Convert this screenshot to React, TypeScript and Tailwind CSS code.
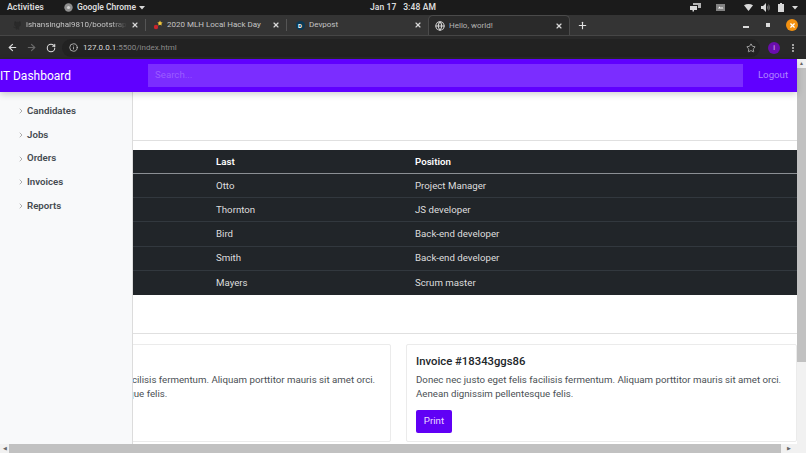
import React from "react";
import { Star, EllipsisVertical, Plus, X, ArrowLeft, ArrowRight, RotateCw, Info, ChevronRight, Globe, Github } from "lucide-react";

const font = "font-['Roboto','Noto_Sans',sans-serif]";

function Tab({ title, icon, active, sep = true, width, pad, fade }: { title: string; icon: React.ReactNode; active?: boolean; sep?: boolean; width: string; pad: string; fade?: boolean }) {
  return (
    <div className={`flex items-center h-full ${width} ${active ? "bg-[#2a2a2a] rounded-t-[5px] border border-b-0 border-[#4a4a4a] text-[#b4b4b4]" : "text-[#c4c4c4]"}`}>
      <div className={`flex items-center flex-1 min-w-0 ${pad} pr-[6px] gap-[4px]`}>
        <span className="w-[10px] h-[10px] shrink-0 flex items-center justify-center">{icon}</span>
        <span className={`flex-1 text-[8px] whitespace-nowrap overflow-hidden ${fade ? "[mask-image:linear-gradient(90deg,#000_85%,transparent)]" : ""}`}>{title}</span>
        <X className="w-[8px] h-[8px] text-[#d8d8d8] shrink-0" strokeWidth={3.5} />
      </div>
      {sep && !active && <div className="w-px h-[12px] bg-[#555]" />}
    </div>
  );
}

const rows = [
  ["1", "Otto", "Project Manager"],
  ["2", "Thornton", "JS developer"],
  ["3", "Bird", "Back-end developer"],
  ["4", "Smith", "Back-end developer"],
  ["5", "Mayers", "Scrum master"],
];

function Card() {
  return (
    <div className="flex-1 h-[98px] bg-white border border-[#ebebeb] rounded-[2px] px-[9px] pt-[8px]">
      <h5 className="text-[11.3px] leading-[17px] font-medium text-[#212529]">Invoice #18343ggs86</h5>
      <p className="mt-[3px] text-[9.7px] leading-[14px] text-[#4a4f54]">
        Donec nec justo eget felis facilisis fermentum. Aliquam porttitor mauris sit amet orci. Aenean dignissim pellentesque felis.
      </p>
      <button className="mt-[9px] w-[36px] h-[23px] bg-[#6000f5] rounded-[2px] text-[#ead9ff] text-[9.7px]">Print</button>
    </div>
  );
}

export default function App() {
  return (
    <div className={`${font} w-[806px] h-[453px] overflow-hidden flex flex-col bg-white`}>
      {/* GNOME top bar */}
      <div className="h-[15px] shrink-0 bg-[#1b1b1b] grid grid-cols-[1fr_auto_1fr] items-center text-[#dcdcdc] text-[8.5px] font-medium">
        <div className="flex items-center">
          <span className="ml-[7px] font-semibold text-[8.8px]">Activities</span>
          <svg className="ml-[20px]" width="9" height="9" viewBox="0 0 9 9"><circle cx="4.5" cy="4.5" r="4.2" fill="#8f8f8f" /><circle cx="4.5" cy="4.5" r="1.6" fill="#d0d0d0" /></svg>
          <span className="ml-[4px] font-semibold">Google Chrome</span>
          <svg className="ml-[3px]" width="6" height="4" viewBox="0 0 6 4"><path d="M0 0h6L3 3.5z" fill="#d8d8d8" /></svg>
        </div>
        <span className="font-semibold tracking-[0.1px]">Jan 17 &nbsp; 3:48 AM</span>
        <div className="flex items-center justify-end pr-[8px] text-[#d8d8d8]">
          <svg width="11" height="9" viewBox="0 0 11 9" fill="currentColor"><path d="M0 3h7v4H4v1.5H2.5V7H0z" /><path d="M3 0h8v5H8V2H3z" opacity=".8" /></svg>
          <svg className="ml-[15px]" width="9" height="7" viewBox="0 0 9 7" fill="currentColor"><path d="M0 0h9v7H0z" opacity=".55" /><path d="M2 4.5l1.5-2 1.5 1.5 1-1 1.5 1.5z" fill="#fff" /></svg>
          <svg className="ml-[19px]" width="9" height="7" viewBox="0 0 9 7" fill="currentColor"><path d="M0 1.2C2.6-.4 6.4-.4 9 1.2L4.5 7z" /></svg>
          <svg className="ml-[8px]" width="9" height="9" viewBox="0 0 9 9" fill="currentColor"><path d="M0 3h2l3-3v9L2 6H0z" /><path d="M6 2.2c1 .8 1 3.8 0 4.6zM7.5 1c1.6 1.6 1.6 5.4 0 7z" opacity=".55" /></svg>
          <svg className="ml-[8px]" width="6" height="9" viewBox="0 0 6 9" fill="currentColor"><path d="M2 0h2v1h2v8H0V1h2z" /></svg>
          <svg className="ml-[8px]" width="6" height="4" viewBox="0 0 6 4"><path d="M0 0h6L3 3.5z" fill="#d8d8d8" /></svg>
        </div>
      </div>

      {/* Tab strip */}
      <div className="h-[21px] shrink-0 bg-[#343434] flex items-end border-b border-[#464646]">
        <div className="flex items-center h-[20px]">
          <Tab width="w-[146px]" pad="pl-[12px]" fade title="ishansinghal9810/bootstrap-" icon={<Github className="w-[9px] h-[9px] text-[#2a2a2a]" fill="currentColor" />} />
          <Tab width="w-[141px]" pad="pl-[7px]" title="2020 MLH Local Hack Day" icon={
            <svg width="10" height="10" viewBox="0 0 10 10"><circle cx="3" cy="7" r="2.2" fill="#c9252d" /><path d="M7 0.5l.9 1.7 1.8.3-1.3 1.3.3 1.8L7 4.8l-1.7.8.3-1.8L4.3 2.5l1.8-.3z" fill="#f0c63c" /></svg>
          } />
          <Tab width="w-[141px]" pad="pl-[8px]" sep={false} title="Devpost" icon={<span className="w-[9px] h-[9px] rounded-full bg-[#0b3954] text-white text-[6px] font-bold leading-[9px] text-center">D</span>} />
          <Tab width="w-[142px]" pad="pl-[6px]" active title="Hello, world!" icon={<Globe className="w-[10px] h-[10px] text-[#d5d5d5]" strokeWidth={2.5} />} />
          <Plus className="w-[11px] h-[11px] text-[#e2e2e2] ml-[7px]" strokeWidth={2.5} />
        </div>
        <div className="flex-1 h-[20px] flex items-center justify-end pr-[8px]">
          <span className="w-[6px] h-[2px] mt-[4px] bg-[#dcdcdc]" />
          <span className="ml-[17px] w-[4px] h-[4px] bg-[#dcdcdc]" />
          <span className="ml-[16px] w-[12px] h-[12px] rounded-full bg-[#f29111] flex items-center justify-center">
            <X className="w-[7px] h-[7px] text-white" strokeWidth={4} />
          </span>
        </div>
      </div>

      {/* Toolbar */}
      <div className="h-[23px] shrink-0 bg-[#292929] flex items-center">
        <ArrowLeft className="w-[11px] h-[11px] ml-[7px] text-[#dcdcdc]" strokeWidth={2.5} />
        <ArrowRight className="w-[11px] h-[11px] ml-[8px] text-[#6a6a6a]" strokeWidth={2.5} />
        <RotateCw className="w-[10px] h-[10px] ml-[9px] text-[#dcdcdc]" strokeWidth={2.5} />
        <div className="ml-[6px] flex-1 h-[18px] rounded-full bg-[#222222] flex items-center pl-[7px]">
          <Info className="w-[9px] h-[9px] text-[#d0d0d0]" />
          <span className="ml-[5px] text-[8px] text-[#dcdcdc]">127.0.0.1<span className="text-[#8a8a8a]">:5500/index.html</span></span>
          <Star className="w-[10px] h-[10px] ml-auto mr-[4px] text-[#b8b8b8]" strokeWidth={2} />
        </div>
        <span className="ml-[8px] w-[12px] h-[12px] rounded-full bg-[#6a0dad] text-[7px] text-[#e0d0f0] text-center leading-[12px]">i</span>
        <EllipsisVertical className="w-[10px] h-[10px] ml-[8px] mr-[8px] text-[#c8c8c8]" strokeWidth={3} />
      </div>

      {/* Page viewport */}
      <div className="flex-1 min-h-0 flex flex-col">
        <div className="flex-1 min-h-0 flex">
          <div className="w-[797px] flex flex-col min-h-0">
            {/* Navbar */}
            <div className="h-[33px] shrink-0 bg-[#6000ff] flex items-center relative z-20 shadow-[0_2px_7px_rgba(0,0,0,0.2)]">
              <span className="w-[148px] text-white text-[12px]">IT Dashboard</span>
              <div className="w-[595px] h-[23px] bg-[#7b2dff] flex items-center pl-[7px] text-[9.7px] text-[#9a5cff]">Search...</div>
              <span className="flex-1 pl-[6px] text-center text-[9.7px] text-[#b084ff]">Logout</span>
            </div>

            <div className="flex-1 min-h-0 flex">
              {/* Sidebar */}
              <div className="w-[133px] shrink-0 bg-[#f8f9fa] border-r border-[#dcdcdc] pt-[7.5px] relative z-10">
                {["Candidates", "Jobs", "Orders", "Invoices", "Reports"].map((n) => (
                  <div key={n} className="h-[23.7px] flex items-center pl-[17px] text-[9.7px] font-semibold text-[#444a50]">
                    <ChevronRight className="w-[8px] h-[8px] text-[#8a8a8a] mr-[2px]" />
                    <span>{n}</span>
                  </div>
                ))}
              </div>

              {/* Main */}
              <div className="flex-1 min-w-0 overflow-hidden">
                <div className="-ml-[133px] w-[797px]">
                  <div className="h-[49px] border-b border-[#e0e0e0]" />
                  <div className="mt-[9px] bg-[#212529] text-white text-[9.7px]">
                    <div className="grid grid-cols-[208px_199px_1fr] h-[24px] pt-[1px] items-center border-b border-[#8b8f94] font-semibold">
                      <span />
                      <span className="pl-[8px]">Last</span>
                      <span className="pl-[8px]">Position</span>
                    </div>
                    {rows.map((r) => (
                      <div key={r[0]} className="grid grid-cols-[208px_199px_1fr] h-[24.2px] pt-[1px] items-center border-b border-[#32383e] last:border-b-0 text-[#dedede]">
                        <span />
                        <span className="pl-[8px]">{r[1]}</span>
                        <span className="pl-[8px]">{r[2]}</span>
                      </div>
                    ))}
                  </div>
                  <div className="h-[39px] border-b border-[#e0e0e0]" />
                  <div className="mt-[10px] flex gap-[15px]">
                    <Card />
                    <Card />
                  </div>
                </div>
              </div>
            </div>
          </div>

          {/* Vertical scrollbar */}
          <div className="w-[9px] shrink-0 bg-[#f1f1f1] flex flex-col items-center">
            <span className="text-[5px] leading-[9px] text-[#666]">▲</span>
            <div className="w-full h-[294px] bg-[#c1c1c1]" />
          </div>
        </div>

        {/* Horizontal scrollbar */}
        <div className="h-[9px] shrink-0 bg-[#f1f1f1] flex items-center">
          <span className="w-[9px] text-[5px] text-center text-[#666]">◀</span>
          <div className="flex-1 h-full bg-[#c1c1c1]" />
          <span className="w-[16px] text-[5px] text-center text-[#666]">▶</span>
          <div className="w-[9px] h-full bg-[#f1f1f1]" />
        </div>
      </div>
    </div>
  );
}
